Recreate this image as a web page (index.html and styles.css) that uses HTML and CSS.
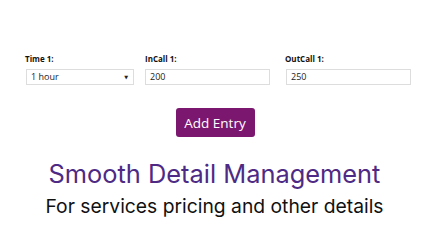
FILE: index.html
```html
<!DOCTYPE html>
<html>
<head>
<meta charset="utf-8">
<link rel="stylesheet" href="styles.css">
</head>
<body>
<div class="page">
  <div class="row">
    <div class="field f1">
      <label class="lbl">Time 1:</label>
      <div class="box select"><span>1 hour</span><span class="caret">▼</span></div>
    </div>
    <div class="field f2">
      <label class="lbl">InCall 1:</label>
      <div class="box input">200</div>
    </div>
    <div class="field f3">
      <label class="lbl">OutCall 1:</label>
      <div class="box input">250</div>
    </div>
  </div>
  <div class="actions"><button class="btn">Add Entry</button></div>
  <h1 class="title">Smooth Detail Management</h1>
  <p class="sub">For services pricing and other details</p>
</div>
</body>
</html>
```
FILE: styles.css
```css
html, body { margin: 0; padding: 0; background: #fff; }
.page { padding-top: 53px; }
.row { display: flex; padding-left: 25px; }
.field { display: flex; flex-direction: column; }
.f1 { width: 120px; }
.f2 { width: 140px; }
.f3 { width: 126px; }
.lbl { font-family: "Open Sans", "DejaVu Sans", sans-serif; font-weight: 700; font-size: 8px; color: #111; height: 11px; line-height: 11px; margin-bottom: 5px; }
.box { box-sizing: border-box; height: 16px; border: 1px solid #ddd; font-family: "Open Sans", "DejaVu Sans", sans-serif; font-size: 9px; color: #222; line-height: 14px; padding-left: 4px; }
.f1 .box { width: 108px; margin-left: 1px; }
.f2 .box { width: 125px; }
.f3 .box { width: 125px; margin-left: 1px; }
.select { display: flex; justify-content: space-between; padding-right: 5px; }
.caret { font-size: 5px; color: #222; }
.actions { display: flex; justify-content: center; margin-top: 23px; padding-left: 1px; }
.btn { width: 79px; height: 29px; background: #7b176f; color: #fff; border: none; border-radius: 3px; font-family: "Open Sans", "Noto Sans", sans-serif; font-size: 13.5px; padding: 0; }
.title { margin: 22px 0 0; text-align: center; font-family: Inter, Roboto, sans-serif; font-weight: 400; font-size: 25.4px; line-height: 30px; color: #4e2a84; }
.sub { margin: 5px 0 0; text-align: center; font-family: Inter, Roboto, sans-serif; font-size: 19.3px; line-height: 24px; color: #111; }
```
